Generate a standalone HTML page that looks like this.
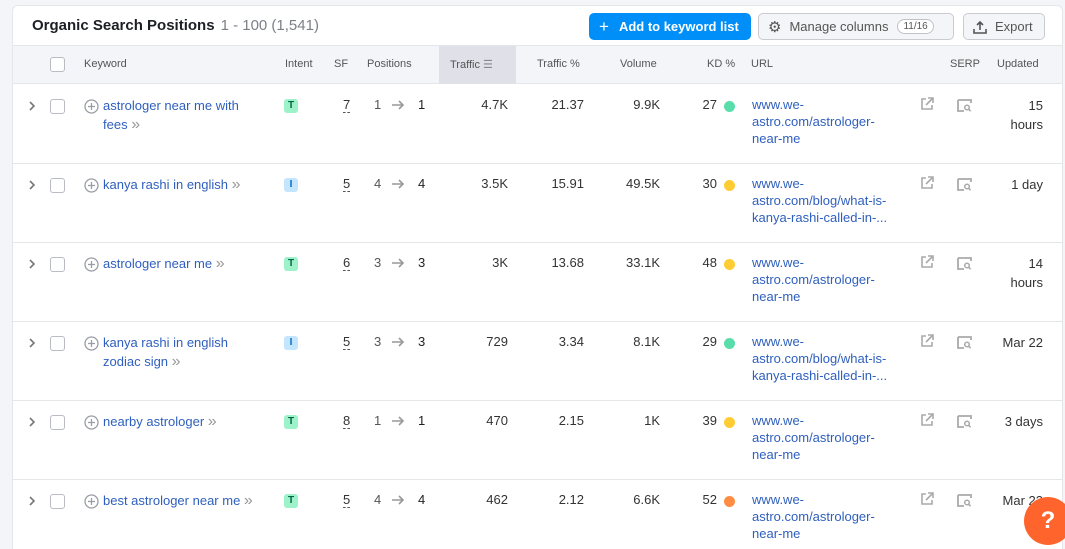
<!DOCTYPE html>
<html><head><meta charset="utf-8"><style>
*{box-sizing:border-box;margin:0;padding:0}
html,body{width:1065px;height:549px;overflow:hidden}
body{background:#f4f5f9;font-family:"Liberation Sans",sans-serif;color:#333;position:relative}
.card{position:absolute;left:12px;top:5px;width:1051px;height:544px;background:#fff;border:1px solid #e4e6ea;border-bottom:none;border-radius:6px 6px 0 0;overflow:hidden}
.title{position:absolute;left:19px;top:11px;font-size:15px;font-weight:bold;color:#1d1f26}
.title span{font-weight:normal;color:#7c7f88;margin-left:6px}
.btn{position:absolute;top:7px;height:27px;border-radius:5px;font-size:13px;display:flex;align-items:center}
.b1{left:576px;width:162px;background:#008ff8;color:#fff;font-weight:bold;padding-left:10px}
.b2{left:745px;width:196px;background:#f4f5f9;border:1px solid #c9cbd1;color:#555;padding-left:9px}
.b3{left:950px;width:82px;background:#f4f5f9;border:1px solid #c9cbd1;color:#555;padding-left:9px}
.pill{border:1px solid #bfc2c8;border-radius:10px;font-size:10px;padding:1px 5px;margin-left:9px;background:#fff}
.head{position:absolute;left:0;top:39px;width:100%;height:39px;background:#f4f5f9;border-top:1px solid #e4e6ea;border-bottom:1px solid #e4e6ea;font-size:11px;color:#555}
.head div{position:absolute;top:12px}
.tr{position:absolute;left:0;width:100%;height:79px;border-bottom:1px solid #e4e6ea;font-size:13px}
.tr>*{position:absolute}
.cb{width:15px;height:15px;border:1px solid #b9bcc3;border-radius:3px;background:#fff}
.kw{left:90px;top:11px;width:160px;color:#2e5fbe;line-height:19px}
.badge{left:271px;top:14px;width:14px;height:14px;border-radius:3px;font-size:10px;font-weight:bold;text-align:center;line-height:14px}
.T{background:#9ef2c9;color:#006644}.I{background:#c4e5fe;color:#006dca}
.r{text-align:right}
.url{left:739px;top:11px;width:160px;color:#2e5fbe;line-height:17px}
.dot{width:11px;height:11px;border-radius:50%;top:16px;left:711px}
.upd{right:19px;top:11px;text-align:right;line-height:19px;width:60px}
.mm{color:#999;font-size:16px}
</style></head><body>
<div class="card">
<div class="title">Organic Search Positions<span>1 - 100 (1,541)</span></div>
<div class="btn b1"><span style="font-size:17px;margin-right:10px;font-weight:normal">+</span>Add to keyword list</div>
<div class="btn b2"><span style="font-size:15px;margin-right:8px">⚙</span>Manage columns<span class="pill">11/16</span></div>
<div class="btn b3"><svg width="14" height="14" viewBox="0 0 14 14" style="margin-right:8px"><path d="M7 10V2M4 5l3-3 3 3M1 9v4h12V9" fill="none" stroke="#555" stroke-width="1.6"/></svg>Export</div>
<div class="head">
<div class="cb" style="left:37px;top:11px"></div>
<div style="left:71px">Keyword</div><div style="left:272px">Intent</div><div style="left:321px">SF</div><div style="left:354px">Positions</div>
<div style="left:426px;top:0;width:77px;height:38px;background:#e0e1e8;padding:12px 0 0 11px">Traffic <span style="color:#888">☰</span></div>
<div style="left:524px">Traffic %</div><div style="left:607px">Volume</div><div style="left:694px">KD %</div><div style="left:738px">URL</div><div style="left:937px">SERP</div><div style="left:984px">Updated</div>
</div>
<div id="rows"></div>
</div>
<div style="position:absolute;left:1024px;top:497px;width:48px;height:48px;border-radius:50%;background:#ff642d;color:#fff;font-size:24px;font-weight:bold;text-align:center;line-height:48px">?</div>
<script>
var d=[["astrologer near me with fees","T",7,1,1,"4.7K","21.37","9.9K",27,"#59deab","www.we-<br>astro.com/astrologer-<br>near-me","15<br>hours"],
["kanya rashi in english","I",5,4,4,"3.5K","15.91","49.5K",30,"#ffcc33","www.we-<br>astro.com/blog/what-is-<br>kanya-rashi-called-in-...","1 day"],
["astrologer near me","T",6,3,3,"3K","13.68","33.1K",48,"#ffcc33","www.we-<br>astro.com/astrologer-<br>near-me","14<br>hours"],
["kanya rashi in english zodiac sign","I",5,3,3,"729","3.34","8.1K",29,"#59deab","www.we-<br>astro.com/blog/what-is-<br>kanya-rashi-called-in-...","Mar 22"],
["nearby astrologer","T",8,1,1,"470","2.15","1K",39,"#ffcc33","www.we-<br>astro.com/astrologer-<br>near-me","3 days"],
["best astrologer near me","T",5,4,4,"462","2.12","6.6K",52,"#ff8c43","www.we-<br>astro.com/astrologer-<br>near-me","Mar 22"]];
var h="";d.forEach(function(r,i){var t=79+i*79;
h+='<div class="tr" style="top:'+t+'px"><svg style="left:15px;top:16px" width="8" height="10" viewBox="0 0 8 10"><path d="M2 1l4 4-4 4" fill="none" stroke="#777" stroke-width="1.6"/></svg><div class="cb" style="left:37px;top:14px"></div>'+
'<svg style="left:71px;top:14px" width="15" height="15" viewBox="0 0 15 15"><circle cx="7.5" cy="7.5" r="6.5" fill="none" stroke="#9a9da5" stroke-width="1.3"/><path d="M7.5 4v7M4 7.5h7" stroke="#9a9da5" stroke-width="1.3"/></svg>'+
'<div class="kw">'+r[0]+' <span class="mm">»</span></div><div class="badge '+r[1]+'">'+r[1]+'</div>'+
'<div style="left:330px;top:12px;border-bottom:1px dashed #555;line-height:15px">'+r[2]+'</div>'+
'<div style="left:361px;top:12px;color:#555">'+r[3]+'</div><svg style="left:378px;top:15px" width="14" height="10" viewBox="0 0 14 10"><path d="M1 5h11M8 1l4 4-4 4" fill="none" stroke="#999" stroke-width="1.6"/></svg><div style="left:405px;top:12px;color:#222">'+r[4]+'</div>'+
'<div class="r" style="left:440px;width:55px;top:12px">'+r[5]+'</div><div class="r" style="left:510px;width:61px;top:12px">'+r[6]+'</div><div class="r" style="left:590px;width:57px;top:12px">'+r[7]+'</div>'+
'<div class="r" style="left:680px;width:24px;top:12px">'+r[8]+'</div><div class="dot" style="background:'+r[9]+'"></div><div class="url">'+r[10]+'</div>'+
'<svg style="left:907px;top:12px" width="14" height="14" viewBox="0 0 14 14"><path d="M6 2H2v10h10V8M8 1h5v5M13 1L6 8" fill="none" stroke="#aaa" stroke-width="1.6"/></svg>'+
'<svg style="left:944px;top:14px" width="15" height="13" viewBox="0 0 15 13"><path d="M1 1h13v3M1 1v11h6" fill="none" stroke="#aaa" stroke-width="1.8"/><circle cx="10" cy="8.5" r="2.3" fill="none" stroke="#aaa" stroke-width="1.5"/><path d="M11.6 10.2l2 2" stroke="#aaa" stroke-width="1.6"/></svg>'+
'<div class="upd">'+r[11]+'</div></div>';});
document.getElementById("rows").outerHTML=h;
</script>
</body></html>
